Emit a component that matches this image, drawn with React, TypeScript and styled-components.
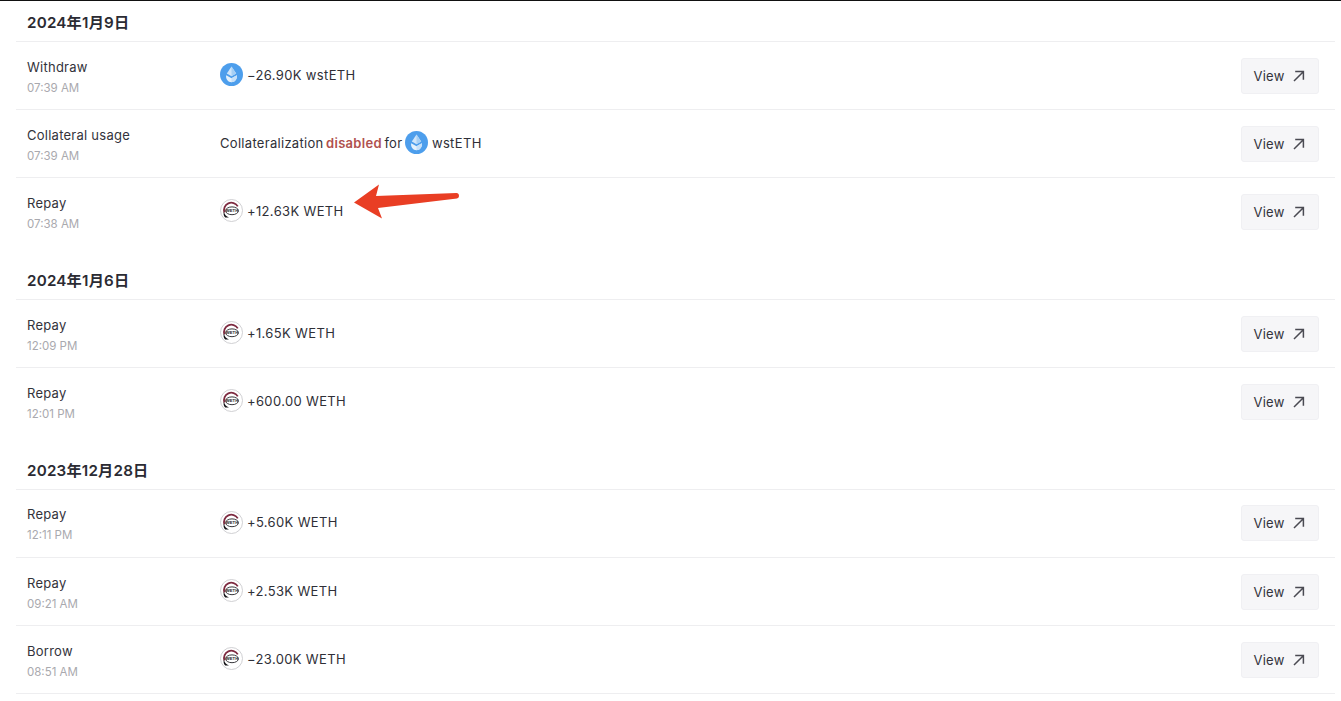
import React from "react"
import styled, { createGlobalStyle } from "styled-components"

type TokenType = "wsteth" | "weth"

type RowType = {
    title: string
    time: string
    amount?: string
    token: TokenType
    collateral?: boolean
}

type GroupType = {
    date: string
    rows: RowType[]
    closed?: boolean
}

const groups: GroupType[] = [
    {
        date: "2024年1月9日",
        rows: [
            { title: "Withdraw", time: "07:39 AM", amount: "−26.90K wstETH", token: "wsteth" },
            { title: "Collateral usage", time: "07:39 AM", token: "wsteth", collateral: true },
            { title: "Repay", time: "07:38 AM", amount: "+12.63K WETH", token: "weth" },
        ],
    },
    {
        date: "2024年1月6日",
        rows: [
            { title: "Repay", time: "12:09 PM", amount: "+1.65K WETH", token: "weth" },
            { title: "Repay", time: "12:01 PM", amount: "+600.00 WETH", token: "weth" },
        ],
    },
    {
        date: "2023年12月28日",
        closed: true,
        rows: [
            { title: "Repay", time: "12:11 PM", amount: "+5.60K WETH", token: "weth" },
            { title: "Repay", time: "09:21 AM", amount: "+2.53K WETH", token: "weth" },
            { title: "Borrow", time: "08:51 AM", amount: "−23.00K WETH", token: "weth" },
        ],
    },
]

const WstethIcon = () => (
    <svg width="23" height="23" viewBox="0 0 23 23">
        <circle cx="11.5" cy="11.5" r="11.5" fill="#4d9eec" />
        <path d="M11.5 3.5 L16.2 10.6 L11.5 13.2 L6.8 10.6 Z" fill="#cfe5fa" />
        <path d="M6.2 12.2 L11.5 15.2 L16.8 12.2 C17.6 15.8 15 19.2 11.5 19.2 C8 19.2 5.4 15.8 6.2 12.2 Z" fill="#e4f1fc" />
        <path d="M11.5 3.5 L16.2 10.6 L11.5 13.2 Z" fill="#a5cff5" />
        <path d="M11.5 15.2 L16.8 12.2 C17.6 15.8 15 19.2 11.5 19.2 Z" fill="#c6e0f9" />
    </svg>
)

const WethIcon = () => (
    <svg width="23" height="23" viewBox="0 0 23 23">
        <circle cx="11.5" cy="11.5" r="11" fill="#fff" stroke="#c4c4c8" strokeWidth="0.8" />
        <path d="M4.4 13.5 A7.4 7.4 0 0 1 17.8 7.4" fill="none" stroke="#7d2a40" strokeWidth="1.8" />
        <path d="M3.9 12.5 C4.4 15.6 6.2 17.4 9 18.4 L5.2 18.6 C3.6 17 3.2 14.6 3.9 12.5 Z" fill="#111114" />
        <ellipse cx="12" cy="11.8" rx="6.4" ry="3.9" fill="#fff" stroke="#222227" strokeWidth="0.9" />
        <IconLabel x="12" y="13.4">WETH</IconLabel>
    </svg>
)

const TokenIcon = ({ token }: { token: TokenType }) => (
    <IconHolder>{token === "wsteth" ? <WstethIcon /> : <WethIcon />}</IconHolder>
)

const ViewArrow = () => (
    <svg width="12" height="12" viewBox="0 0 12 12" fill="none" stroke="#4a4a52" strokeWidth="1.5">
        <path d="M1 11 L10.3 1.7 M2.2 1.6 H10.4 V9.8" />
    </svg>
)

export default function App() {
    return (
        <Page>
            <GlobalStyle />
            {groups.map((group) => (
                <Group key={group.date}>
                    <DateTitle>{group.date}</DateTitle>
                    {group.rows.map((row, index) => (
                        <Row key={row.title + row.time} $closed={group.closed || index < group.rows.length - 1}>
                            <Action>
                                <ActionTitle>{row.title}</ActionTitle>
                                <ActionTime>{row.time}</ActionTime>
                            </Action>
                            <Details>
                                {row.collateral ? (
                                    <>
                                        <span>Collateralization</span>
                                        <Disabled>disabled</Disabled>
                                        <span>for</span>
                                        <TokenIcon token={row.token} />
                                        <Amount>{"wstETH"}</Amount>
                                    </>
                                ) : (
                                    <>
                                        <TokenIcon token={row.token} />
                                        <Amount>{row.amount}</Amount>
                                    </>
                                )}
                            </Details>
                            <ViewButton>
                                View
                                <ViewArrow />
                            </ViewButton>
                        </Row>
                    ))}
                </Group>
            ))}
            <Annotation width="108" height="37" viewBox="0 0 108 37">
                <path
                    d="M1 19.5 L26 1.5 L23 13 L103.5 10 C106.5 10 107 15 104 15.5 L25 25 L29 35.5 Z"
                    fill="#e93e24"
                />
            </Annotation>
        </Page>
    )
}

const GlobalStyle = createGlobalStyle`
    html, body {
        margin: 0;
        background: #fff;
    }

    body {
        font-family: Inter, "Noto Sans CJK SC", sans-serif;
        color: #2b2b33;
    }
`

const Page = styled.div`
    position: relative;
    height: 701px;
    overflow: hidden;
    box-sizing: border-box;
    padding: 0 6px 0 16px;
    border-top: 1px solid #111;
`

const Group = styled.section`
    margin-bottom: 12.4px;
`

const DateTitle = styled.h3`
    margin: 0;
    height: 41px;
    padding: 0 11px;
    display: flex;
    align-items: center;
    font-size: 15.2px;
    letter-spacing: 0.2px;
    font-weight: 600;
    color: #2b2b33;
    border-bottom: 1px solid #eeeef0;
    box-sizing: border-box;
`

const Row = styled.div<{ $closed?: boolean }>`
    height: 68.2px;
    box-sizing: border-box;
    padding: 0 16px 0 11px;
    display: flex;
    align-items: center;
    border-bottom: 1px solid ${({ $closed }) => ($closed ? "#eeeef0" : "transparent")};
`

const Action = styled.div`
    width: 193px;
    flex-shrink: 0;
    display: flex;
    flex-direction: column;
    gap: 6px;
    margin-top: 2px;
`

const ActionTitle = styled.div`
    font-size: 13px;
    line-height: 16px;
    letter-spacing: 0.25px;
    color: #33333b;
`

const ActionTime = styled.div`
    font-size: 11.5px;
    line-height: 14px;
    color: #a9a9ae;
`

const Details = styled.div`
    flex: 1;
    display: flex;
    align-items: center;
    gap: 2.5px;
    font-size: 13px;
    letter-spacing: 0.3px;
    color: #2f2f37;
    margin-top: -2px;
`

const Amount = styled.span`
    margin-left: 1.5px;
    letter-spacing: 0.35px;
`

const IconHolder = styled.span`
    display: inline-flex;
    width: 23px;
    height: 23px;
`

const IconLabel = styled.text`
    font-family: "Liberation Sans", sans-serif;
    font-size: 4.2px;
    font-weight: 700;
    letter-spacing: 0;
    text-anchor: middle;
    fill: #222227;
`

const Disabled = styled.span`
    font-weight: 600;
    color: #b0514e;
`

const ViewButton = styled.button`
    width: 78px;
    height: 36px;
    padding: 0 2px 0 0;
    display: flex;
    align-items: center;
    justify-content: center;
    gap: 8px;
    border: 1px solid #f0f0f3;
    border-radius: 3px;
    background: #f6f6f8;
    font-family: inherit;
    font-size: 13px;
    letter-spacing: 0.25px;
    color: #33333b;
`

const Annotation = styled.svg`
    position: absolute;
    left: 353px;
    top: 182px;
`
